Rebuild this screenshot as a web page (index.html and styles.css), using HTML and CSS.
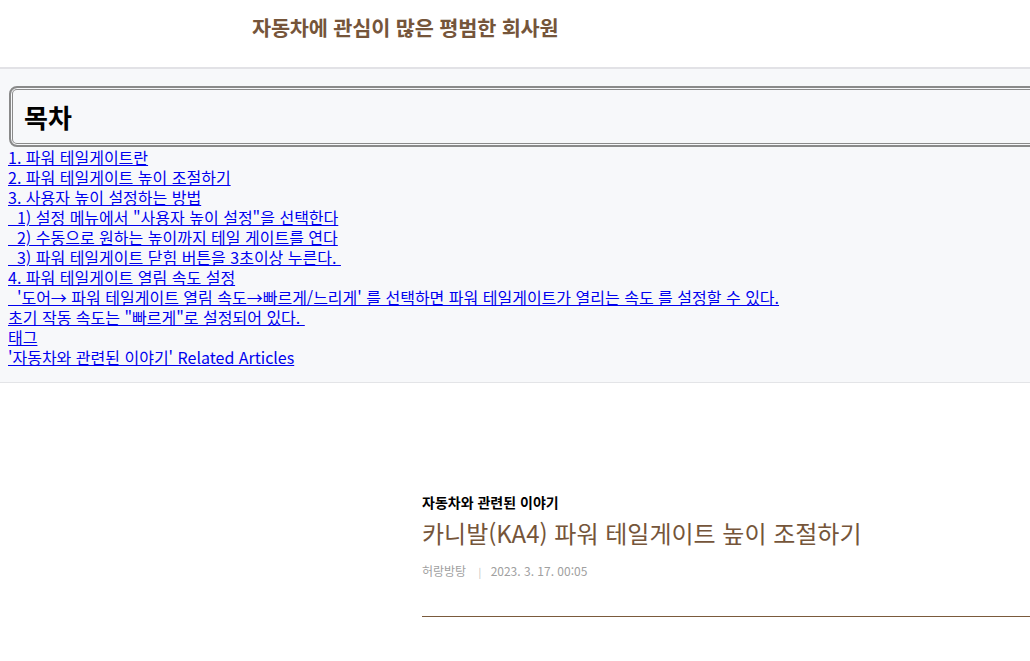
FILE: index.html
```html
<!DOCTYPE html>
<html lang="ko">
<head>
  <meta charset="UTF-8">
  <meta name="viewport" content="width=device-width, initial-scale=1.0">
  <title>카니발(KA4) 파워 테일게이트 높이 조절하기</title>
  <link rel="stylesheet" href="styles.css">
</head>
<body>
  <header class="site-header">
    <h1 class="blog-title">자동차에 관심이 많은 평범한 회사원</h1>
  </header>

  <section class="toc">
    <div class="toc-head">목차</div>
    <ul class="toc-list">
      <li><a href="#">1. 파워 테일게이트란</a></li>
      <li><a href="#">2. 파워 테일게이트 높이 조절하기</a></li>
      <li><a href="#">3. 사용자 높이 설정하는 방법</a></li>
      <li><a href="#">&nbsp;&nbsp;1) 설정 메뉴에서 "사용자 높이 설정"을 선택한다</a></li>
      <li><a href="#">&nbsp;&nbsp;2) 수동으로 원하는 높이까지 테일 게이트를 연다</a></li>
      <li><a href="#">&nbsp;&nbsp;3) 파워 테일게이트 닫힘 버튼을 3초이상 누른다.&nbsp;</a></li>
      <li><a href="#">4. 파워 테일게이트 열림 속도 설정</a></li>
      <li><a href="#">&nbsp;&nbsp;'도어→ 파워 테일게이트 열림 속도→빠르게/느리게' 를 선택하면 파워 테일게이트가 열리는 속도 를 설정할 수 있다.</a></li>
      <li><a href="#">초기 작동 속도는 "빠르게"로 설정되어 있다.&nbsp;</a></li>
      <li><a href="#">태그</a></li>
      <li><a href="#">'자동차와 관련된 이야기' Related Articles</a></li>
    </ul>
  </section>

  <main class="post">
    <div class="post-cover">
      <div class="post-category">자동차와 관련된 이야기</div>
      <h2 class="post-title">카니발(KA4) 파워 테일게이트 높이 조절하기</h2>
      <div class="post-meta">
        <span class="author">허랑방탕</span>
        <span class="sep">|</span>
        <span class="date">2023. 3. 17. 00:05</span>
      </div>
    </div>
  </main>
</body>
</html>
```

FILE: styles.css
```css
html { overflow: hidden; }
body { margin: 0; padding: 0; font-family: "Noto Sans CJK KR", "Noto Sans", sans-serif; background: #fff; }

.site-header { height: 67px; border-bottom: 2px solid #e2e2e6; box-sizing: content-box; }
.blog-title { margin: 0; padding: 12px 0 0 252px; font-size: 20.8px; line-height: 30px; font-weight: 700; letter-spacing: -0.2px; color: #75553a; }

.toc { background: #f7f8fa; padding: 17px 0 15px 8px; border-bottom: 1px solid #e3e4e7; }
.toc-head {
  width: 1100px; height: 57px; margin-left: 1px; padding-left: 13px;
  border: 2px solid #8a8a8a; border-radius: 8px;
  box-shadow: inset 0 0 0 1px #f7f8fa, inset 0 0 0 2px #8a8a8a;
  font-size: 26px; font-weight: 700; line-height: 57px; color: #000;
}
.toc-list { list-style: none; margin: 0; padding: 0; font-size: 16px; line-height: 20px; }
.toc-list a { color: #0000ee; text-decoration: underline; white-space: pre; }

.post { padding: 109px 0 0 422px; }
.post-category { font-size: 14px; font-weight: 700; line-height: 20px; color: #000; }
.post-title { margin: 3px 0 0; font-size: 24px; font-weight: 400; line-height: 36px; color: #75553a; }
.post-meta { margin-top: 12px; font-size: 12px; line-height: 16px; color: #a0a0a0; padding-bottom: 36px; border-bottom: 1px solid #7a5a3c; }
.post-meta .sep { margin: 0 6px 0 9px; font-size: 10px; color: #bbb; }
```
